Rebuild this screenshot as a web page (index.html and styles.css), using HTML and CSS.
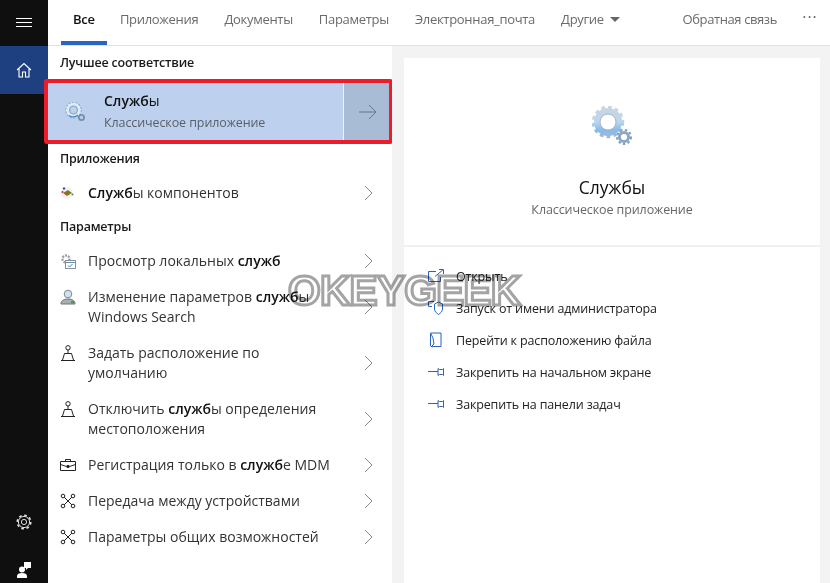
FILE: index.html
```html
<!DOCTYPE html>
<html lang="ru">
<head>
    <meta charset="UTF-8">
    <title>Поиск</title>
    <link rel="stylesheet" href="styles.css">
</head>
<body>
    <svg class="defs" width="0" height="0">
        <defs>
            <linearGradient id="gearFill" gradientUnits="userSpaceOnUse" x1="0" y1="0" x2="0" y2="32">
                <stop offset="0" stop-color="#c9d5df"/>
                <stop offset="0.5" stop-color="#bcd6ec"/>
                <stop offset="0.75" stop-color="#86bbee"/>
                <stop offset="1" stop-color="#a6b8ca"/>
            </linearGradient>
            <symbol id="gears" viewBox="0 0 42 40">
                <circle cx="17" cy="16" r="8" fill="#fff" fill-opacity="0.85"/>
                <circle cx="17" cy="16" r="11" fill="none" stroke="url(#gearFill)" stroke-width="6"/>
                <circle cx="17" cy="16" r="14.5" fill="none" stroke="url(#gearFill)" stroke-width="3.5" stroke-dasharray="3.6 3.2"/>
                <circle cx="17" cy="16" r="8" fill="none" stroke="#a9b6c2" stroke-width="1"/>
                <circle cx="33" cy="31" r="3" fill="#fff" fill-opacity="0.85"/>
                <circle cx="33" cy="31" r="4.600" fill="none" stroke="#8aa7c6" stroke-width="3"/>
                <circle cx="33" cy="31" r="7" fill="none" stroke="#7d9cbd" stroke-width="2" stroke-dasharray="2.4 2.4"/>
            </symbol>
            <symbol id="gears-small" viewBox="0 0 21 20">
                <circle cx="8.500" cy="8" r="6" fill="none" stroke="#dcedf7" stroke-width="3"/>
                <circle cx="8.500" cy="8" r="7.800" fill="none" stroke="#8fb0cf" stroke-width="1.200" stroke-dasharray="2 1.500"/>
                <circle cx="8.500" cy="8" r="4" fill="none" stroke="#6f95b8" stroke-width="0.800"/>
                <path d="M4 13.500c3 2 6 2 9-.500" fill="none" stroke="#4f86c2" stroke-width="1.200"/>
                <circle cx="16.500" cy="15.500" r="2.600" fill="none" stroke="#7391ae" stroke-width="1.800"/>
            </symbol>
            <symbol id="chev" viewBox="0 0 9 16">
                <path d="M1 1l7 7-7 7" fill="none" stroke="#8a8a8a" stroke-width="1"/>
            </symbol>
            <symbol id="pin-loc" viewBox="0 0 16 16">
                <circle cx="8" cy="2.800" r="2.200" fill="none" stroke="#222" stroke-width="1"/>
                <path d="M8 5v3M4.500 8.500h7l2 6.500M2.500 15l2-6.500M1 15.500h14" fill="none" stroke="#222" stroke-width="1"/>
            </symbol>
            <symbol id="share" viewBox="0 0 16 16">
                <path d="M3.500 3.500L12.500 12.500M12.500 3.500L3.500 12.500" fill="none" stroke="#222" stroke-width="1"/>
                <circle cx="3" cy="3" r="1.800" fill="#fff" stroke="#222"/>
                <circle cx="13" cy="3" r="1.800" fill="#fff" stroke="#222"/>
                <circle cx="3" cy="13" r="1.800" fill="#fff" stroke="#222"/>
                <circle cx="13" cy="13" r="1.800" fill="#fff" stroke="#222"/>
            </symbol>
            <symbol id="pin-act" viewBox="0 0 16 9">
                <path d="M0 3.500h10M10 .5l1.500 1h3l1-1v7l-1-1h-3l-1.500 1z" fill="none" stroke="#2b63c4" stroke-width="1"/>
            </symbol>
        </defs>
    </svg>

    <div class="window">
        <aside class="sidebar">
            <div class="side-top">
                <div class="burger">
                    <svg width="16" height="9" viewBox="0 0 16 9"><path d="M0 .5h16M0 4.500h16M0 8.500h16" stroke="#fff" stroke-width="1"/></svg>
                </div>
                <div class="side-home">
                    <svg width="16" height="16" viewBox="0 0 16 16"><path d="M1 8l7-6.500 7 6.500M3 6.500V15h3.500v-5h3v5H13V6.500" fill="none" stroke="#fff" stroke-width="1.100"/></svg>
                </div>
            </div>
            <div class="side-bottom">
                <div class="side-btn">
                    <svg width="16" height="16" viewBox="0 0 16 16">
                        <circle cx="8" cy="8" r="2.600" fill="none" stroke="#ddd"/>
                        <circle cx="8" cy="8" r="5.600" fill="none" stroke="#ddd"/>
                        <circle cx="8" cy="8" r="6.800" fill="none" stroke="#ddd" stroke-width="1.600" stroke-dasharray="2.700 2.640"/>
                    </svg>
                </div>
                <div class="side-btn side-user">
                    <svg width="14" height="16" viewBox="0 0 14 16">
                        <path d="M7 0h7v6h-3L9 8V6H7z" fill="#fff"/>
                        <circle cx="5" cy="7.500" r="3" fill="#fff"/>
                        <path d="M0 16v-2c0-2 2-3 5-3s5 1 5 3v2z" fill="#fff"/>
                    </svg>
                </div>
            </div>
        </aside>

        <div class="main">
            <nav class="tabs">
                <div class="tab tab-active">Все</div>
                <div class="tab">Приложения</div>
                <div class="tab">Документы</div>
                <div class="tab">Параметры</div>
                <div class="tab">Электронная_почта</div>
                <div class="tab">Другие <span class="caret"></span></div>
                <div class="tabs-right">
                    <div class="tab tab-feedback">Обратная связь</div>
                    <div class="dots">···</div>
                </div>
            </nav>

            <div class="content">
                <section class="results">
                    <h4 class="group-title group-first">Лучшее соответствие</h4>
                    <div class="best">
                        <div class="best-main">
                            <svg class="best-icon" width="21" height="20"><use href="#gears-small"/></svg>
                            <div>
                                <div class="best-name">Служб<span class="thin">ы</span></div>
                                <div class="best-sub">Классическое приложение</div>
                            </div>
                        </div>
                        <div class="best-arrow">
                            <svg width="18" height="16" viewBox="0 0 18 16"><path d="M0 8h17M10 1l7 7-7 7" fill="none" stroke="#6b7583" stroke-width="1"/></svg>
                        </div>
                    </div>

                    <h4 class="group-title">Приложения</h4>
                    <div class="row">
                        <span class="row-icon">
                            <svg width="16" height="16" viewBox="0 0 16 16">
                                <circle cx="7" cy="8" r="6" fill="#f2f2f2"/>
                                <path d="M3 8l5-3 4 3-5 3z" fill="#8a7420"/>
                                <circle cx="4" cy="3.500" r="1.200" fill="#3a4fb0"/>
                                <circle cx="2.500" cy="7" r="1" fill="#c03030"/>
                                <circle cx="12.500" cy="9.500" r="1" fill="#3a9a3a"/>
                            </svg>
                        </span>
                        <div class="row-text"><b>Служб</b>ы компонентов</div>
                        <svg class="chev" width="9" height="16"><use href="#chev"/></svg>
                    </div>

                    <h4 class="group-title">Параметры</h4>
                    <div class="row">
                        <span class="row-icon">
                            <svg width="16" height="16" viewBox="0 0 16 16">
                                <circle cx="6" cy="6" r="3.500" fill="none" stroke="#9aa0a6" stroke-width="2.400" stroke-dasharray="2 1"/>
                                <rect x="5.500" y="7.500" width="10" height="8" fill="#fff" stroke="#8a8f96"/>
                                <path d="M5.500 9.500h10" stroke="#6d8db5"/>
                                <path d="M8 12.500l1.500 1.500 3-3" fill="none" stroke="#3d79c4"/>
                            </svg>
                        </span>
                        <div class="row-text">Просмотр локальных <b>служб</b></div>
                        <svg class="chev" width="9" height="16"><use href="#chev"/></svg>
                    </div>
                    <div class="row row-tall">
                        <span class="row-icon">
                            <svg width="16" height="16" viewBox="0 0 16 16">
                                <circle cx="8" cy="5" r="3.800" fill="#cfe0ef" stroke="#7b8a99"/>
                                <path d="M1 15c0-3 2-5 7-5s7 2 7 5z" fill="#a8aeb4" stroke="#6f757b"/>
                                <rect x="11" y="12" width="3" height="2.500" fill="#3ea63e"/>
                            </svg>
                        </span>
                        <div class="row-text">Изменение параметров <b>служб</b>ы<br>Windows Search</div>
                        <svg class="chev" width="9" height="16"><use href="#chev"/></svg>
                    </div>
                    <div class="row row-tall">
                        <span class="row-icon"><svg width="16" height="16"><use href="#pin-loc"/></svg></span>
                        <div class="row-text">Задать расположение по<br>умолчанию</div>
                        <svg class="chev" width="9" height="16"><use href="#chev"/></svg>
                    </div>
                    <div class="row row-tall">
                        <span class="row-icon"><svg width="16" height="16"><use href="#pin-loc"/></svg></span>
                        <div class="row-text">Отключить <b>служб</b>ы определения<br>местоположения</div>
                        <svg class="chev" width="9" height="16"><use href="#chev"/></svg>
                    </div>
                    <div class="row">
                        <span class="row-icon">
                            <svg width="16" height="12" viewBox="0 0 16 12">
                                <path d="M.5 2.500h15v9H.5zM5.500 2.500V.5h5v2M.5 5.500l6 2h3l6-2M7 6.500h2v2H7z" fill="none" stroke="#222"/>
                            </svg>
                        </span>
                        <div class="row-text">Регистрация только в <b>служб</b>е MDM</div>
                        <svg class="chev" width="9" height="16"><use href="#chev"/></svg>
                    </div>
                    <div class="row">
                        <span class="row-icon"><svg width="16" height="16"><use href="#share"/></svg></span>
                        <div class="row-text">Передача между устройствами</div>
                        <svg class="chev" width="9" height="16"><use href="#chev"/></svg>
                    </div>
                    <div class="row">
                        <span class="row-icon"><svg width="16" height="16"><use href="#share"/></svg></span>
                        <div class="row-text">Параметры общих возможностей</div>
                        <svg class="chev" width="9" height="16"><use href="#chev"/></svg>
                    </div>
                </section>

                <section class="preview">
                    <div class="card">
                        <div class="card-head">
                            <svg class="card-icon" width="42" height="40"><use href="#gears"/></svg>
                            <div class="card-name">Службы</div>
                            <div class="card-sub">Классическое приложение</div>
                        </div>
                        <div class="actions">
                            <div class="action">
                                <svg width="16" height="14" viewBox="0 0 16 14"><path d="M8 2.500H.5v10h12V8M7 7.500L15 .8M11 .5h4.500V5" fill="none" stroke="#2b63c4"/></svg>
                                <span>Открыть</span>
                            </div>
                            <div class="action">
                                <svg width="16" height="14" viewBox="0 0 16 14"><path d="M6 .5H.5v5H4M6.500 3l4-2 4 2v5c0 2.500-2 4-4 5.500-2-1.500-4-3-4-5.500z" fill="none" stroke="#2b63c4"/></svg>
                                <span>Запуск от имени администратора</span>
                            </div>
                            <div class="action">
                                <svg width="16" height="16" viewBox="0 0 16 16"><path d="M2.500 1h10.500v13.500H4.500V13L6 12 5 6 2.500 1v13l2 1" fill="none" stroke="#2b63c4"/></svg>
                                <span>Перейти к расположению файла</span>
                            </div>
                            <div class="action">
                                <svg width="16" height="9"><use href="#pin-act"/></svg>
                                <span>Закрепить на начальном экране</span>
                            </div>
                            <div class="action">
                                <svg width="16" height="9"><use href="#pin-act"/></svg>
                                <span>Закрепить на панели задач</span>
                            </div>
                        </div>
                    </div>
                </section>
            </div>
        </div>
    </div>

    <div class="watermark">OKEYGEEK</div>
</body>
</html>
```

FILE: styles.css
```css
* {
    box-sizing: border-box;
}

html, body {
    height: 100%;
}

body {
    margin: 0;
    overflow: hidden;
    background-color: white;
    color: #1a1a1a;
    font-family: "Open Sans", "Noto Sans", sans-serif;
    font-size: 14px;
    position: relative;
}

.defs {
    position: absolute;
}

.window {
    display: flex;
    height: 583px;
}

.sidebar {
    width: 48px;
    background-color: #0f0f0f;
    display: flex;
    flex-direction: column;
    justify-content: space-between;
}

.burger {
    height: 46px;
    display: flex;
    align-items: center;
    justify-content: center;
    padding-bottom: 1px;
}

.side-home {
    height: 48px;
    background-color: #1e4080;
    display: flex;
    align-items: center;
    justify-content: center;
}

.side-btn {
    height: 40px;
    display: flex;
    align-items: center;
    justify-content: center;
}

.side-user {
    height: 41px;
    align-items: flex-end;
    padding-bottom: 5px;
}

.main {
    flex: 1;
    display: flex;
    flex-direction: column;
    min-width: 0;
}

.tabs {
    height: 46px;
    display: flex;
    padding-left: 13px;
    border-bottom: 1px solid #e3e3e3;
}

.tab {
    padding: 10px 13px 0;
    font-size: 13px;
    letter-spacing: -0.3px;
    color: #6b6b6b;
    white-space: nowrap;
}

.tab-active {
    padding: 10px 12px 0;
    color: #111;
    font-weight: 600;
    letter-spacing: -0.2px;
    border-bottom: 4px solid #2b63c4;
    height: 45px;
}

.tab-feedback {
    letter-spacing: -0.4px;
}

.caret {
    display: inline-block;
    width: 0;
    height: 0;
    margin-left: 3px;
    vertical-align: 2px;
    border-left: 5px solid transparent;
    border-right: 5px solid transparent;
    border-top: 5px solid #666;
}

.tabs-right {
    margin-left: auto;
    display: flex;
}

.dots {
    width: 40px;
    padding-top: 6px;
    text-align: center;
    font-size: 16px;
    color: #666;
    letter-spacing: 1px;
}

.content {
    flex: 1;
    display: flex;
    min-height: 0;
}

.results {
    width: 344px;
    background-color: white;
}

.group-title {
    margin: 0;
    padding-left: 12px;
    height: 32px;
    line-height: 32px;
    font-size: 12.500px;
    font-weight: 600;
    letter-spacing: -0.2px;
}

.group-first {
    line-height: 34px;
}

.best {
    margin: 1px 0 -1px -4px;
    width: 349px;
    height: 65px;
    border: 4px solid #ee1c2b;
    border-radius: 3px;
    display: flex;
    background-color: #bdd1ee;
}

.best-main {
    flex: 1;
    display: flex;
    align-items: center;
    padding-left: 17px;
    border-right: 1px solid #eef3fa;
}

.best-icon {
    margin-right: 18px;
}

.best-name {
    font-size: 14px;
    font-weight: 600;
    color: #111;
    line-height: 20px;
}

.thin {
    font-weight: 400;
}

.best-sub {
    font-size: 12.500px;
    color: #5a6068;
    letter-spacing: -0.1px;
    line-height: 20px;
    margin-top: 2px;
}

.best-arrow {
    width: 45px;
    background-color: #a9bcd6;
    display: flex;
    align-items: center;
    justify-content: center;
    padding-left: 3px;
}

.row {
    height: 36px;
    display: flex;
    align-items: center;
    padding-left: 12px;
}

.row-tall {
    height: 56px;
}

.row-icon {
    width: 28px;
    flex: none;
    display: flex;
    align-items: center;
}

.row-tall .row-icon {
    align-self: flex-start;
    margin-top: 10px;
}

.row-text {
    flex: 1;
    font-size: 14px;
    line-height: 20px;
    color: #333;
    white-space: nowrap;
}

.row-text b {
    font-weight: 600;
    color: #111;
}

.chev {
    margin-right: 19px;
    flex: none;
}

.preview {
    flex: 1;
    background-color: #f3f3f3;
    padding: 12px 10px 0 12px;
}

.card {
    background-color: white;
    height: 100%;
}

.card-head {
    height: 189px;
    border-bottom: 2px solid #f0f0f0;
    display: flex;
    flex-direction: column;
    align-items: center;
    padding-top: 48px;
}

.card-name {
    margin-top: 30px;
    font-size: 17.500px;
    color: #111;
    line-height: 22px;
}

.card-sub {
    font-size: 12.500px;
    color: #666;
    letter-spacing: -0.1px;
    line-height: 20px;
    margin-top: 2px;
}

.actions {
    padding-top: 13px;
}

.action {
    height: 32px;
    display: flex;
    align-items: center;
    gap: 12px;
    padding-left: 24px;
    font-size: 12.500px;
    letter-spacing: -0.15px;
    color: #222;
}

.action svg {
    flex: none;
}

/* водяной знак поверх всего окна, текст под ним остаётся читаемым */
.watermark {
    position: absolute;
    left: 288px;
    top: 263px;
    font-family: "Liberation Sans", sans-serif;
    font-size: 42px;
    font-weight: 700;
    letter-spacing: -0.7px;
    line-height: 56px;
    color: white;
    -webkit-text-stroke: 3px #a4a4a4;
    mix-blend-mode: multiply;
}
```
